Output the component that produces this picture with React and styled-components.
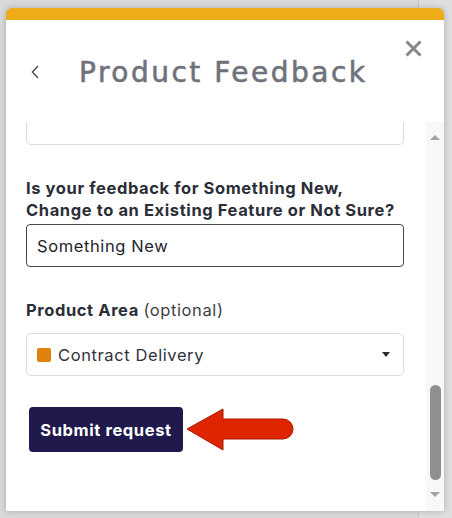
import styled, { createGlobalStyle } from 'styled-components'

const Global = createGlobalStyle`
    html, body {
        margin: 0;
        padding: 0;
        background: #d9d9d9;
    }
    * { box-sizing: border-box; }
`

const Frame = styled.div`
    width: 452px;
    height: 518px;
    padding: 8px 8px 7px 6px;
    background: linear-gradient(90deg, #d9d9d9 0, #d9d9d9 418px, #c9c9c9 418px, #c9c9c9 419px, #dedede 419px);
`

const Panel = styled.div`
    width: 438px;
    height: 503px;
    background: #fff;
    border-top: 12px solid #eeac19;
    border-radius: 6px 6px 2px 2px;
    box-shadow: 0 0 6px rgba(0, 0, 0, 0.22);
    display: flex;
    flex-direction: column;
    overflow: hidden;
`

const Header = styled.div`
    height: 102px;
    display: flex;
    align-items: flex-start;
    padding: 0 22px 0 24px;
`

const Back = styled.button`
    border: none;
    background: none;
    padding: 0;
    margin-top: 44px;
    width: 10px;
    height: 16px;
    display: flex;
    cursor: pointer;
`

const Title = styled.h1`
    margin: 33px 0 0 39px;
    flex: 1;
    font-family: "DejaVu Sans", sans-serif;
    font-weight: 500;
    font-size: 28px;
    line-height: 40px;
    letter-spacing: 2.5px;
    color: #6f727a;
    -webkit-text-stroke: 0.6px #6f727a;
`

const Close = styled.button`
    border: none;
    background: none;
    padding: 0;
    margin-top: 20px;
    width: 17px;
    height: 17px;
    display: flex;
    cursor: pointer;
`

const Body = styled.div`
    flex: 1;
    display: flex;
    min-height: 0;
`

const Content = styled.div`
    flex: 1;
    padding: 0 22px 0 20px;
    font-family: Inter, "Liberation Sans", sans-serif;
    font-size: 16.5px;
    letter-spacing: 0.6px;
    overflow: hidden;
`

const ClippedField = styled.div`
    height: 23px;
    border: 1px solid #dcdcdf;
    border-top: none;
    border-radius: 0 0 5px 5px;
`

const Label = styled.label`
    display: block;
    margin: ${p => p.$top}px 0 ${p => p.$bottom}px;
    line-height: 22px;
    font-weight: 700;
    color: #2b2e37;
    span {
        font-weight: 400;
        color: #3c3f47;
    }
`

const Input = styled.div`
    height: 43px;
    border: 1.5px solid #45474d;
    border-radius: 4px;
    padding: 0 10px;
    display: flex;
    align-items: center;
    color: #23252b;
`

const Select = styled.div`
    height: 43px;
    border: 1px solid #dcdcdf;
    border-radius: 5px;
    padding: 0 13px 0 10px;
    display: flex;
    align-items: center;
    gap: 7px;
    color: #30333b;
`

const Swatch = styled.i`
    width: 14px;
    height: 14px;
    border-radius: 2px;
    background: ${p => p.$color};
`

const SelectText = styled.span`
    flex: 1;
`

const Caret = styled.i`
    width: 0;
    height: 0;
    border-left: 4.5px solid transparent;
    border-right: 4.5px solid transparent;
    border-top: 5px solid #2b2b2b;
`

const ButtonRow = styled.div`
    margin-top: 31px;
    padding-left: 3px;
    display: flex;
    align-items: center;
`

const Submit = styled.button`
    height: 45px;
    width: 154px;
    padding: 0;
    border: none;
    border-radius: 4px;
    background: #1f1a4b;
    color: #fff;
    font-family: Inter, "Liberation Sans", sans-serif;
    font-size: 16.5px;
    letter-spacing: 0.6px;
    font-weight: 700;
    cursor: pointer;
`

const Scrollbar = styled.div`
    width: 18px;
    background: #f8f8f8;
    display: flex;
    flex-direction: column;
    align-items: center;
    padding: 2px 0 4px;
`

const ScrollArrow = styled.div`
    height: 26px;
    display: flex;
    align-items: center;
    justify-content: center;
    &::before {
        content: "";
        border-left: 5px solid transparent;
        border-right: 5px solid transparent;
        ${p => p.$down ? 'border-top: 5px solid #a3a3a3;' : 'border-bottom: 5px solid #a3a3a3;'}
    }
`

const Track = styled.div`
    flex: 1;
    display: flex;
    flex-direction: column;
    justify-content: flex-end;
`

const Thumb = styled.div`
    width: 11px;
    height: 95px;
    margin-bottom: 1px;
    border-radius: 6px;
    background: #8f8f8f;
`

const App = () => {
    return (
        <Frame>
            <Global />
            <Panel>
                <Header>
                    <Back aria-label="Back">
                        <svg width="10" height="16" viewBox="0 0 10 16">
                            <path d="M8 2 L2.5 8 L8 14" fill="none" stroke="#55575d" strokeWidth="1.6" />
                        </svg>
                    </Back>
                    <Title>Product Feedback</Title>
                    <Close aria-label="Close">
                        <svg width="17" height="17" viewBox="0 0 17 17">
                            <path d="M1.5 1.5 L15.5 15.5 M15.5 1.5 L1.5 15.5" stroke="#86888d" strokeWidth="3" />
                        </svg>
                    </Close>
                </Header>
                <Body>
                    <Content>
                        <ClippedField />
                        <Label $top={32} $bottom={3}>
                            Is your feedback for Something New, Change to an Existing Feature or Not Sure?
                        </Label>
                        <Input>Something New</Input>
                        <Label $top={32} $bottom={12}>
                            Product Area <span>(optional)</span>
                        </Label>
                        <Select>
                            <Swatch $color="#e0810c" />
                            <SelectText>Contract Delivery</SelectText>
                            <Caret />
                        </Select>
                        <ButtonRow>
                            <Submit>Submit request</Submit>
                            <svg width="112" height="44" viewBox="0 0 112 44" style={{ marginLeft: 3 }}>
                                <path
                                    d="M1 21 L37 1 L37 11 L97 11 A10 10 0 0 1 97 31 L37 31 L37 42 Z"
                                    fill="#df2500"
                                    stroke="#a81a00"
                                    strokeWidth="1"
                                />
                            </svg>
                        </ButtonRow>
                    </Content>
                    <Scrollbar>
                        <ScrollArrow />
                        <Track>
                            <Thumb />
                        </Track>
                        <ScrollArrow $down />
                    </Scrollbar>
                </Body>
            </Panel>
        </Frame>
    )
}

export default App
